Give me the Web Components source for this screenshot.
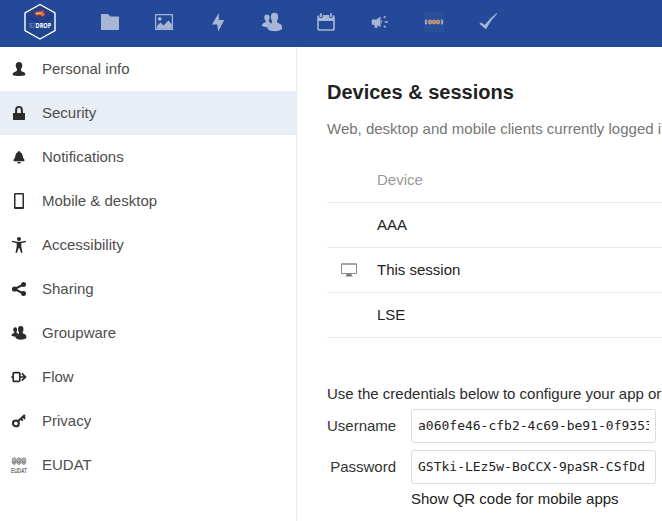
<!DOCTYPE html>
<html lang="en">
<head>
<meta charset="utf-8">
<title>Security - B2DROP</title>
<style>
html,body{margin:0;height:100%;overflow:hidden;background:#fff}
body{font:15px/20px "Liberation Sans",Arial,sans-serif;color:#222}
</style>
</head>
<body>
<settings-page></settings-page>
<script>
const icons = {
  folder:'<path d="M1.700 2h6.300L10.500 4.500h7.800q.7 0 .7.700v12.100q0 .7-.7.700H1.700q-.7 0-.7-.7V2.700Q1 2 1.700 2z"/>',
  picture:'<path fill-rule="evenodd" d="M1.500 2h17q.5 0 .5.500v15q0 .5-.5.500h-17q-.5 0-.5-.5v-15q0-.5.500-.5zM2.200 3.200v13.300h15.600V3.200z"/><path d="M3 16.700v-3L6.500 10.500l3 3L14.500 8.500l3.300 4v4.200z"/><circle cx="5.700" cy="6.800" r="1.900"/>',
  activity:'<path d="M10.700 1 4 12.400h5.200L10.200 19.400 16.200 8h-5.300z"/>',
  contacts:'<path d="M4.900 2.500q2.700 0 2.700 3.300 0 1.900-1 3 .1 1.200 1.400 1.700l1.500.6Q6.500 12.500 6.200 15.100q-4.500.2-6.200-1.100 0-2.300 1.200-2.800l2.200-1q.6-.4.4-1.400Q2.300 7.600 2.300 5.800q0-3.300 2.600-3.300z"/><path d="M12.500.7q3.700 0 3.700 4.300 0 2.500-1.300 4 0 1.800 1.700 2.300 2.600.8 3.200 2.200.4 1.700.2 3.800-2.800 2-7.500 2T5.500 17q0-3.700 1.200-4.200l2.700-1.400q1-.6.700-2.200Q8.800 7.800 8.800 5q0-4.300 3.700-4.300z"/>',
  calendar:'<path fill-rule="evenodd" d="M3.200 3v1.500q0 1.800 1.800 1.800T6.800 4.500V3h6.400v1.500q0 1.800 1.800 1.800t1.800-1.800V3q2 .3 2 2.500v10.700q0 2.600-2.500 2.600H3.700q-2.500 0-2.500-2.600V5.500Q1.200 3.300 3.200 3zM2.800 9v7q0 1.300 1.200 1.300h12q1.200 0 1.200-1.300V9z"/><rect x="4.100" y="1" width="1.800" height="4.300" rx=".9"/><rect x="14.100" y="1" width="1.800" height="4.300" rx=".9"/>',
  announce:'<path d="M2 7.400h4.500l4-2.900v10.800l-3-2.100v2.600H4.600V13L2 12.600q-.8-2.500 0-5.200zM11.300 7.600q1.800 2 0 4.300z"/><path d="m13.700 5.900 2-1.700m-1 5.800h3.300m-4.300 3.800 2 1.700" fill="none" stroke="currentColor" stroke-width="1.500"/>',
  eudat:'<path d="M0 0h20v20H0z" fill="#fff" opacity=".035"/><path d="M2.600 7.600q-2.200 2.300 0 4.800M17.400 7.600q2.200 2.300 0 4.800" fill="none" stroke="#b9c4df" stroke-width="1.300"/><g fill="#b98268" stroke="#cfa07c" stroke-width=".9"><circle cx="6" cy="10" r="1.900"/><circle cx="10" cy="10" r="1.900"/><circle cx="14" cy="10" r="1.900"/></g>',
  check:'<path d="m1.300 11.800 2-1.300 3.500 2.600Q11.500 6.500 18.500.9l.7.700Q12.300 8.800 8 17.200z"/>',
  user:'<path d="M8 1q3.300 0 3.300 3.600Q11.200 6.800 10 8v1.600q.3.700 1.700 1.100 2.300.6 2.500 1.700v1.900Q12 15 8 15t-6.200-.7v-1.900q.3-1.100 2.500-1.700 1.500-.5 1.700-1.100V8Q4.800 6.800 4.700 4.600 4.800 1 8 1z"/>',
  lock:'<path fill-rule="evenodd" d="M8 1q3.900 0 3.900 4v3h1.700q.4 0 .4.400v6.200q0 .4-.4.400H2.400q-.4 0-.4-.4V8.400q0-.4.400-.4h1.700V5Q4.100 1 8 1zm0 1.800Q6.100 2.800 6.100 5v3h3.800V5q0-2.200-1.900-2.200z"/>',
  bell:'<path d="M8 2q1 0 1 1 2.500.8 2.800 4.200.2 2.800 1.600 3.300v1.700H2.600v-1.700Q4 10 4.200 7.200 4.500 3.800 7 3 7 2 8 2zM6 13h4q-.4 1.500-2 1.500T6 13z"/>',
  mobile:'<path fill-rule="evenodd" d="M4.100 0h7.800q1.100 0 1.100 1.200v13.600q0 1.200-1.100 1.200H4.100Q3 16 3 14.800V1.200Q3 0 4.100 0zm.4 1.500v12.400h7V1.500z"/>',
  access:'<circle cx="8" cy="2" r="2"/><path d="m1.200 3.700 5 1h3.600l5-1 .3 1.400-4.800 1.100v3.600l1.200 5.700-1.400.5L8.300 11h-.6l-1.800 5-1.400-.5 1.200-5.700V6.200L.9 5.100z"/>',
  share:'<path d="m12.500 3.500-9 4.500 9 4.500" fill="none" stroke="currentColor" stroke-width="2"/><circle cx="12.500" cy="3.500" r="2.500"/><circle cx="3.500" cy="8" r="2.600"/><circle cx="12.500" cy="12.500" r="2.500"/>',
  flow:'<path d="M3.200 3.700h4.600q1 0 1 1v6.600q0 1-1 1H3.200q-1 0-1-1V4.700q0-1 1-1zM.2 8h2M8.800 8h5.400M10.800 4.300 14.500 8l-3.700 3.700" fill="none" stroke="currentColor" stroke-width="1.700"/>',
  key:'<circle cx="4.900" cy="10.400" r="2.900" fill="none" stroke="currentColor" stroke-width="2.100"/><path d="m7 8.300 6-5.600m-3.200 3 2 2M12 3.700l2.200 2.100" fill="none" stroke="currentColor" stroke-width="1.900"/><circle cx="13.200" cy="2.700" r="1.200"/>',
  monitor:'<path fill="#8a8a8a" fill-rule="evenodd" d="M.7 1.200h14.600q.7 0 .7.700v9.400q0 .7-.7.700H.7q-.7 0-.7-.7V1.900q0-.7.700-.7zM1 2.700v8.300h14V2.700z"/><path fill="#777" d="M5.600 12h4.800l.3 1.500 1.300 1H4l1.300-1z"/>',
  eudatDark:'<g fill="#b0b0b0" stroke="#858585" stroke-width=".7"><path d="M1.200 1.700 3.200.600l2 1.100v4.500L3.200 7.800l-2-1.600zM6 1.700 8 .6l2 1.100v4.500L8 7.800 6 6.200zM10.800 1.700l2-1.100 2 1.100v4.500l-2 1.600-2-1.600z"/></g><path d="m1.500 4.200 1.700 1.600 1.600-1.600m1.600 0L8 5.800l1.600-1.600m1.600 0 1.600 1.600 1.700-1.600" fill="none" stroke="#666" stroke-width=".9"/><text x="0" y="15.600" font-family="Liberation Sans" font-size="8" font-weight="bold" textLength="16" lengthAdjust="spacingAndGlyphs" fill="#707070">EUDAT</text>'
};
icons.groupware='<g transform="translate(.5 .5) scale(.74)">'+icons.contacts+'</g>';
const define=(name,render)=>customElements.define(name,class extends HTMLElement{
  connectedCallback(){
    if(this.shadowRoot)return;
    const t=document.createElement('template');
    t.innerHTML=render(this);
    this.attachShadow({mode:'open'}).append(t.content.cloneNode(true));
  }
});
define('ui-icon',el=>{
  const s=el.getAttribute('size')||16;
  return `<style>:host{display:block;flex:none;width:${s}px;height:${s}px}svg{display:block;overflow:visible}</style>
  <svg width="${s}" height="${s}" viewBox="0 0 ${s} ${s}" fill="currentColor">${icons[el.getAttribute('name')]}</svg>`;
});
define('brand-logo',()=>`<style>:host{display:block;width:32px;height:37px}svg{display:block}</style>
<svg width="32" height="37" viewBox="0 0 32 37"><path d="M16 1.500 31 10v17.500L16 36 1 27.500V10z" fill="#21448f" stroke="#fff" stroke-width="1.400"/>
<path d="M16 3 29 10.500 16 18 3 10.500z" fill="#303c83"/><path d="M3 11.500v3.500l13 6 13-6v-3.500l-13 7z" fill="#1d3e87"/>
<g fill="#dc6a2c"><circle cx="13" cy="10.500" r="2"/><circle cx="16" cy="10.300" r="2"/><circle cx="18.500" cy="11.300" r="2.100"/><circle cx="18.300" cy="8.600" r="1.200"/></g><path d="M12 10.300h5.500" stroke="#f3d5b4" stroke-width=".9"/>
<text y="24.800" font-family="Open Sans,sans-serif" font-size="7"><tspan x="5" fill="#8597c5" textLength="6.300" lengthAdjust="spacingAndGlyphs">B2</tspan><tspan x="11.500" fill="#fff" font-weight="bold" textLength="15.800" lengthAdjust="spacingAndGlyphs">DROP</tspan></text></svg>`);
define('app-header',()=>`<style>:host{display:flex;flex:none;height:47px;background:#254999;color:#a8b6d6;box-sizing:border-box;padding:3px 0 0 24px}
nav{display:flex;gap:34px;padding:9px 0 0 44px}</style><brand-logo></brand-logo><nav>${
['folder','picture','activity','contacts','calendar','announce','eudat','check'].map(n=>`<ui-icon name="${n}" size="20"></ui-icon>`).join('')}</nav>`);
define('nav-item',el=>`<style>:host{display:flex;align-items:center;height:44px;gap:15px;padding-left:11px;color:#2b2b2b}
:host([active]){background:#e9edf5}span{color:#4e4e4e}</style><ui-icon name="${el.getAttribute('icon')}"></ui-icon><span><slot></slot></span>`);
define('settings-nav',()=>`<style>:host{display:block;width:296px;flex:none;border-right:1px solid #ebebeb}</style>${
[['user','Personal info'],['lock','Security'],['bell','Notifications'],['mobile','Mobile &amp; desktop'],['access','Accessibility'],['share','Sharing'],['groupware','Groupware'],['flow','Flow'],['key','Privacy'],['eudatDark','EUDAT']].map(([i,t])=>`<nav-item icon="${i}"${i==='lock'?' active':''}>${t}</nav-item>`).join('')}`);
define('device-row',el=>`<style>:host{display:flex;align-items:center;box-sizing:border-box;height:45px;border-bottom:1px solid #ebebeb;color:#222}
:host([heading]){color:#999}.i{width:36px;padding-left:14px}</style><div class="i">${el.hasAttribute('icon')?'<ui-icon name="monitor"></ui-icon>':''}</div><slot></slot>`);
define('credential-row',el=>`<style>:host{display:flex;align-items:center;height:34px;margin-bottom:7px}
label{width:69px;text-align:right;margin-right:15px;color:#333}
div{box-sizing:border-box;width:245px;height:34px;border:1px solid #dbdbdb;border-radius:3px;padding:0 6px;font:13px/32px "DejaVu Sans Mono",monospace;color:#222}
span{display:block;overflow:hidden;white-space:nowrap}</style><label>${el.getAttribute('label')}</label><div><span><slot></slot></span></div>`);
define('security-panel',()=>`<style>:host{display:block;flex:1;min-width:0;padding:32px 0 0 30px;white-space:nowrap;overflow:hidden}
h2{margin:0;font-size:20px;line-height:26px}p{margin:0}.sub{color:#767676;padding:14px 0 19px}.use{margin-top:46px;margin-bottom:5px;color:#2c2c2c}.qr{padding-left:84px;margin-top:-2px}</style>
<h2>Devices &amp; sessions</h2><p class="sub">Web, desktop and mobile clients currently logged i</p>
<device-row heading>Device</device-row><device-row>AAA</device-row><device-row icon>This session</device-row><device-row>LSE</device-row>
<p class="use">Use the credentials below to configure your app or</p>
<credential-row label="Username">a060fe46-cfb2-4c69-be91-0f9353</credential-row><credential-row label="Password">GSTki-LEz5w-BoCCX-9paSR-CSfDd</credential-row>
<p class="qr">Show QR code for mobile apps</p>`);
define('settings-page',()=>`<style>:host{display:flex;flex-direction:column;height:100vh}main{display:flex;flex:1;min-height:0}</style><app-header></app-header><main><settings-nav></settings-nav><security-panel></security-panel></main>`);
</script>
</body>
</html>
